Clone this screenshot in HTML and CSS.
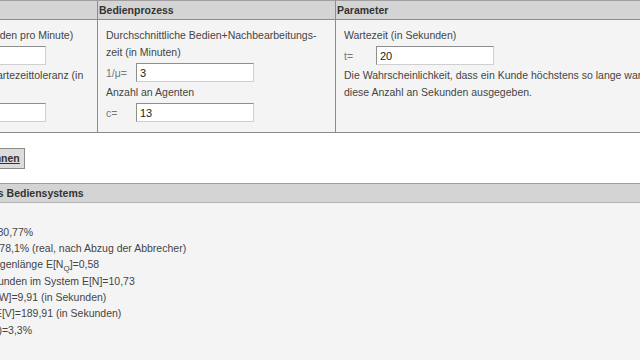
FILE: index.html
```html
<!DOCTYPE html>
<html lang="de">
<head>
  <meta charset="UTF-8" />
  <meta name="viewport" content="width=device-width, initial-scale=1.0" />
  <title>Erlang-C Rechner</title>
  <link rel="stylesheet" href="styles.css">
</head>
<body>
  <div class="page">
    <form class="calc" id="calc-form">
      <div class="calc-head">Ankunftsprozess</div>
      <div class="calc-head">Bedienprozess</div>
      <div class="calc-head">Parameter</div>

      <div class="calc-cell col-1">
        <p>Ankunftsrate (in Kunden pro Minute)</p>
        <div class="field"><span>λ=</span><input type="text" value="3,5"></div>
        <p>Durchschnittliche Wartezeittoleranz (in Sekunden)</p>
        <div class="field"><span>ν=</span><input type="text" value="600"></div>
      </div>
      <div class="calc-cell col-2">
        <p>Durchschnittliche Bedien+Nachbearbeitungs-zeit (in Minuten)</p>
        <div class="field"><span>1/μ=</span><input type="text" value="3"></div>
        <p>Anzahl an Agenten</p>
        <div class="field"><span>c=</span><input type="text" value="13"></div>
      </div>
      <div class="calc-cell col-3">
        <p>Wartezeit (in Sekunden)</p>
        <div class="field"><span>t=</span><input type="text" value="20"></div>
        <p>Die Wahrscheinlichkeit, dass ein Kunde höchstens so lange wartet, wird für<br>diese Anzahl an Sekunden ausgegeben.</p>
      </div>
    </form>

    <div class="actions">
      <button type="submit" form="calc-form">Berechnen</button>
    </div>

    <div class="results">
      <div class="results-head">Leistungsgrößen des Bediensystems</div>
      <div class="results-body">
        <p>Arbeitslast a=10,5</p>
        <p>Auslastung ρ = a/c=80,77%</p>
        <p>Mittlere Auslastung=78,1% (real, nach Abzug der Abbrecher)</p>
        <p>Mittlere Warteschlangenlänge E[N<sub>Q</sub>]=0,58</p>
        <p>Mittlere Anzahl an Kunden im System E[N]=10,73</p>
        <p>Mittlere Wartezeit E[W]=9,91 (in Sekunden)</p>
        <p>Mittlere Verweilzeit E[V]=189,91 (in Sekunden)</p>
        <p>Abbrecheranteil P(A)=3,3%</p>
      </div>
    </div>
  </div>
</body>
</html>
```

FILE: styles.css
```css
body {
  margin: 0;
  overflow: hidden;
  font-family: "Liberation Sans", Arial, sans-serif;
  font-size: 10.5px;
  color: #444;
  background: #fff;
}
.page {
  width: 900px;
  margin-left: -104.5px;
}
.calc {
  display: grid;
  grid-template-columns: 201.5px 238px 1fr;
  margin: 0;
}
.calc-head {
  background: #d4d4d4;
  border-top: 1px solid #a0a0a0;
  border-bottom: 1px solid #8c8c8c;
  border-left: 1px solid #8c8c8c;
  padding: 0 1px;
  line-height: 18px;
  font-weight: bold;
  color: #333;
}
.calc-cell {
  background: #f4f4f4;
  border-left: 1px solid #8c8c8c;
  border-bottom: 1px solid #8c8c8c;
  padding: 7px 8px 7.5px 8px;
}
.calc-cell p {
  margin: 0;
  line-height: 17px;
}
.field {
  display: flex;
  align-items: center;
  height: 23px;
}
.field span {
  font-size: 10.5px;
  color: #777;
  width: 30px;
}
.col-1 .field span { width: 23px; }
.col-3 .field span { width: 32px; }
.field input {
  box-sizing: border-box;
  width: 118px;
  height: 19px;
  margin: 0;
  padding: 0 3px;
  border: 1px solid #cfcfcf;
  border-top-color: #8e8e8e;
  border-left-color: #8e8e8e;
  background: #fff;
  font-family: "Liberation Sans", Arial, sans-serif;
  font-size: 11px;
  color: #222;
}
.actions {
  padding: 15px 0 14px 65px;
}
.actions button {
  height: 21px;
  padding: 0 4px;
  border: 1px solid #8c8c8c;
  background: #dcdcdc;
  font-family: "Liberation Sans", Arial, sans-serif;
  font-size: 10.5px;
  font-weight: bold;
  text-decoration: underline;
  color: #333;
  cursor: pointer;
}
.results-head {
  background: #d4d4d4;
  border-top: 1px solid #a0a0a0;
  border-bottom: 1px solid #b4b4b4;
  padding: 0 2px;
  line-height: 18px;
  font-weight: bold;
  color: #333;
}
.results-body {
  background: #f4f4f4;
  padding: 5px 9px 40px;
}
.results-body p {
  margin: 0;
  line-height: 16.33px;
}
.results-body sub {
  font-size: 8px;
  line-height: 0;
}
```
